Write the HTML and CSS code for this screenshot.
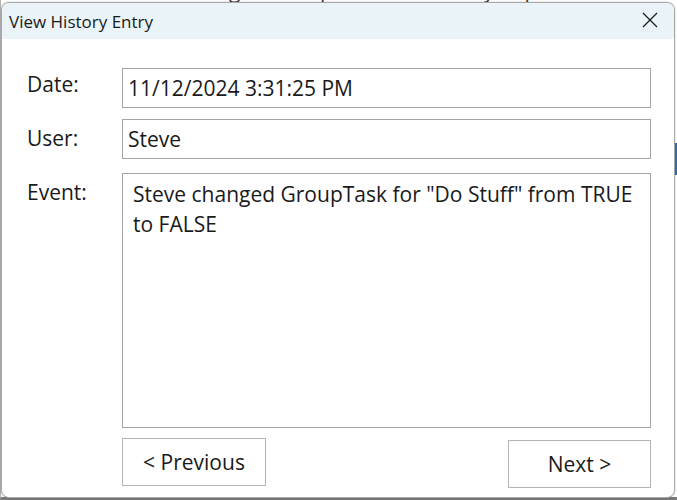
FILE: index.html
```html
<!DOCTYPE html>
<html lang="en">
<head>
<meta charset="utf-8">
<title>View History Entry</title>
<link rel="stylesheet" href="styles.css">
</head>
<body>
  <div class="desk">
    <div class="desk-list">
      <div class="desk-row">Steve changed GroupTask for "Weekly Report" from TRUE to FALSE</div>
      <div class="desk-row desk-row-selected"></div>
    </div>
  </div>

  <div class="dialog">
    <div class="titlebar">
      <span class="title">View History Entry</span>
      <span class="close" aria-label="Close">
        <svg width="16" height="16" viewBox="0 0 16 16">
          <path d="M1 1 L15 15 M15 1 L1 15" stroke="#1b1b1b" stroke-width="1.3" fill="none"/>
        </svg>
      </span>
    </div>

    <div class="content">
      <div class="form">
        <div class="label label-date">Date:</div>
        <div class="field field-date">11/12/2024 3:31:25 PM</div>

        <div class="label label-user">User:</div>
        <div class="field field-user">Steve</div>

        <div class="label label-event">Event:</div>
        <div class="memo">Steve changed GroupTask for "Do Stuff" from TRUE to FALSE</div>

        <div class="buttons">
          <button class="btn btn-prev">&lt; Previous</button>
          <button class="btn btn-next">Next &gt;</button>
        </div>
      </div>
    </div>
  </div>
</body>
</html>
```

FILE: styles.css
```css
html, body {
  margin: 0;
  padding: 0;
}

body {
  width: 677px;
  height: 500px;
  overflow: hidden;
  position: relative;
  background: #ffffff;
  font-family: "Open Sans", "Noto Sans", sans-serif;
  color: #1a1a1a;
}

/* application window behind the dialog */
.desk {
  position: absolute;
  inset: 0;
  overflow: hidden;
  background: #ffffff;
  border-left: 1px solid #b4b4b4;
  border-bottom: 3px solid #7a7a7a;
  box-sizing: border-box;
}

.desk-list {
  display: flex;
  flex-direction: column;
  margin-top: -23px;
}

.desk-row {
  height: 26px;
  padding-left: 122px;
  font-size: 21px;
  line-height: 26px;
  color: #3a3a3a;
  white-space: nowrap;
  overflow: hidden;
}

.desk-row-selected {
  margin-top: 140px;
  height: 32px;
  background: #2f6fb0;
}

/* dialog window */
.dialog {
  position: absolute;
  left: 1px;
  top: 2px;
  width: 674px;
  height: 496px;
  box-sizing: border-box;
  border: 1px solid #a9a9a9;
  border-radius: 8px;
  background: #ffffff;
  overflow: hidden;
  display: flex;
  flex-direction: column;
  box-shadow: 0 0 2px rgba(0, 0, 0, 0.25);
}

.titlebar {
  height: 36px;
  flex: none;
  background: #eaf4f8;
  display: flex;
  align-items: center;
  justify-content: space-between;
  padding-left: 7px;
}

.title {
  font-size: 17px;
  color: #1a1a1a;
}

.close {
  width: 46px;
  height: 36px;
  display: flex;
  align-items: center;
  justify-content: center;
  margin-right: 1px;
  margin-top: -2px;
}

.content {
  flex: 1;
  padding: 29px 22px 0 25px;
}

.form {
  display: grid;
  grid-template-columns: 95px 529px;
  grid-template-rows: 40px 51px 269px 58px;
  font-size: 21px;
}

.label {
  line-height: 30px;
  padding-top: 1px;
}

.label-user,
.field-user {
  margin-top: 11px;
}

.label-event,
.memo {
  margin-top: 14px;
}

.label-user,
.label-event {
  padding-top: 4px;
}

.field {
  border: 1px solid #a5a5a5;
  box-sizing: border-box;
  height: 40px;
  padding: 0 5px;
  display: flex;
  align-items: center;
}

.memo {
  grid-column: 2;
  border: 1px solid #a5a5a5;
  box-sizing: border-box;
  padding: 5px 6px 5px 10px;
  line-height: 30px;
}

.label-user, .field-user { grid-row: 2; }
.label-event, .memo { grid-row: 3; }

.buttons {
  grid-column: 2;
  grid-row: 4;
  margin-top: 10px;
  display: flex;
  justify-content: space-between;
  align-items: flex-start;
}

.btn {
  font-family: inherit;
  font-size: 21px;
  color: #1a1a1a;
  background: #ffffff;
  border: 1px solid #b4b4b4;
  border-radius: 0;
  padding: 0;
  height: 48px;
  width: 144px;
}

.btn-next {
  margin-top: 2px;
  width: 143px;
}
```
